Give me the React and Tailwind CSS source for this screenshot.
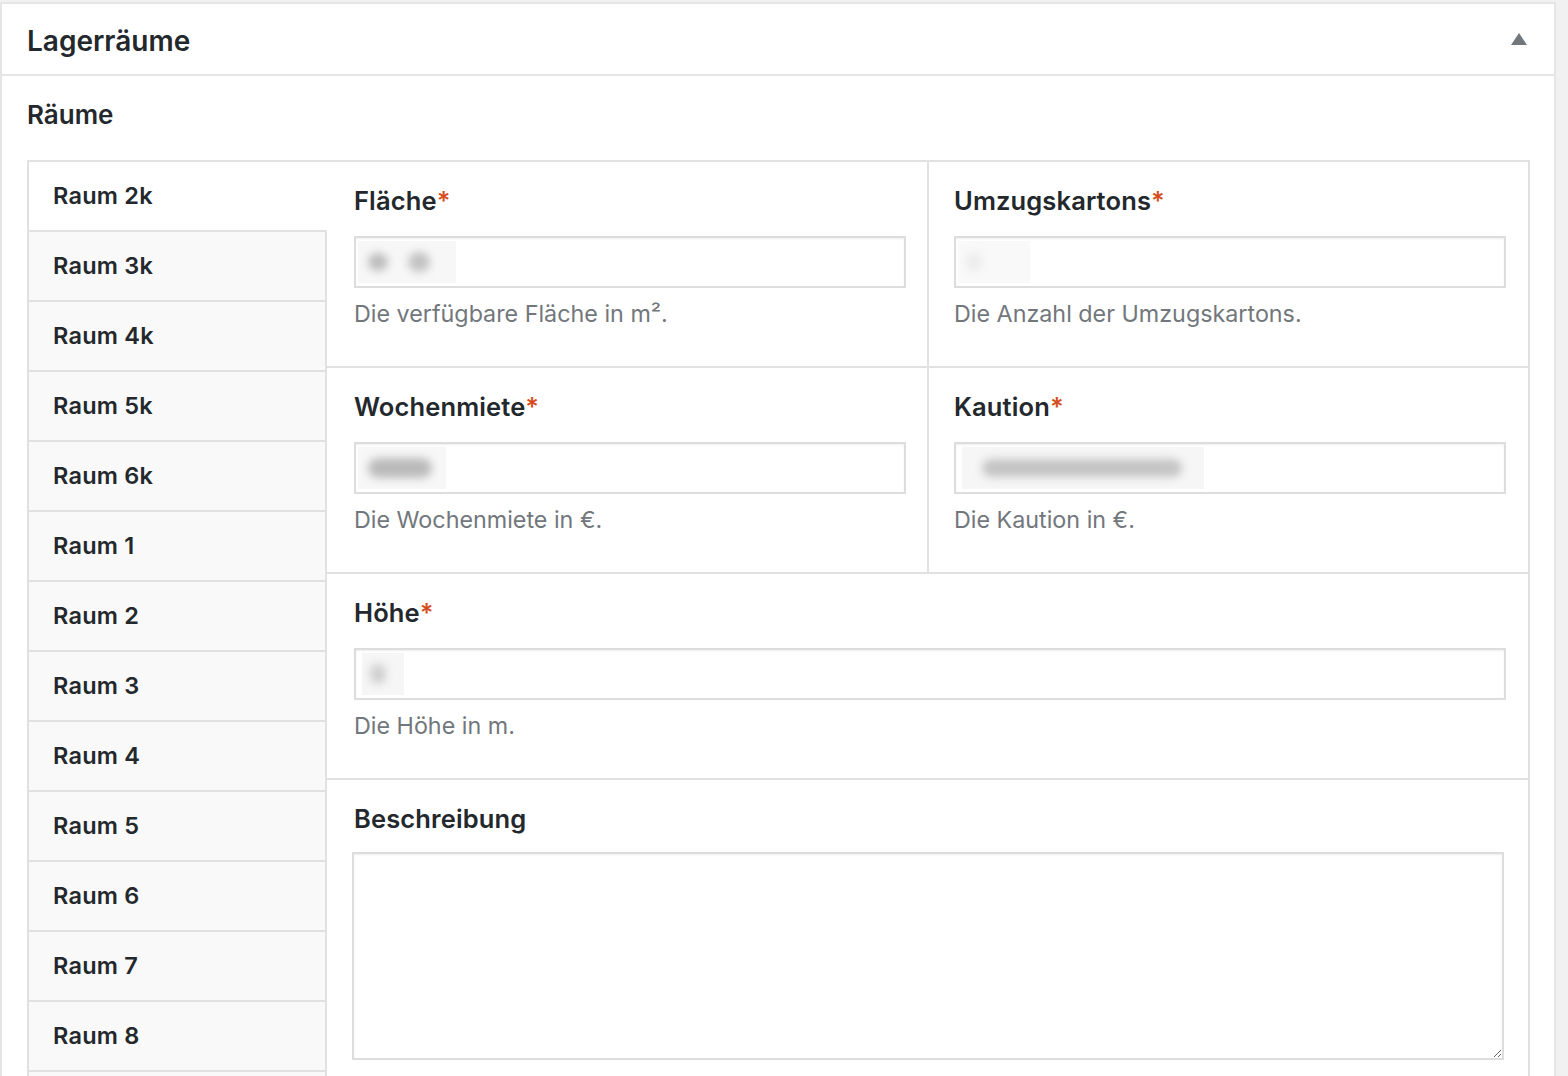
import React from "react";

const tabs = ["Raum 2k","Raum 3k","Raum 4k","Raum 5k","Raum 6k","Raum 1","Raum 2","Raum 3","Raum 4","Raum 5","Raum 6","Raum 7","Raum 8","Raum 9"];

function Label({ children, req = true }) {
  return (
    <div className="h-8 text-[25.5px] leading-8 font-semibold tracking-[0.005em] text-[#23282d]">
      {children}
      {req && <span className="text-[#d54e21]">*</span>}
    </div>
  );
}

function Input({ children }) {
  return (
    <div className="mt-[19px] h-[52px] border-2 border-[#dddddd] bg-white shadow-[inset_0_1px_2px_rgba(0,0,0,0.07)] flex items-stretch py-[3px] overflow-hidden">
      {children}
    </div>
  );
}

function Desc({ children }) {
  return <div className="mt-[10px] text-[23.3px] leading-8 text-[#72777c]">{children}</div>;
}

function Blob({ className }) {
  return <div className={"rounded-full blur-[4px] " + className}></div>;
}

export default function App() {
  return (
    <div className="h-[1076px] w-[1568px] overflow-hidden bg-[#f1f1f1] font-['Inter',sans-serif]">
      <div className="mt-[2px] w-[1556px] border-2 border-[#e5e5e5] bg-white">
        <div className="h-[72px] border-b-2 border-[#e5e5e5] flex items-center justify-between pl-[25px] pr-[27px]">
          <div className="pt-[3px] text-[28px] font-semibold text-[#23282d]">Lagerräume</div>
          <svg width="16" height="12" viewBox="0 0 16 12"><path d="M8 0L16 12H0Z" fill="#72777c" /></svg>
        </div>
        <div className="pl-[25px] pr-[24px] pt-[23px]">
          <div className="h-8 text-[26px] leading-8 font-semibold text-[#23282d]">Räume</div>
          <div className="mt-[29px] flex">
            <div className="w-[300px] shrink-0">
              {tabs.map((t, i) => (
                <div
                  key={t}
                  className={
                    "h-[70px] border-l-2 border-b-2 border-[#e1e1e1] flex items-center pl-[24px] text-[23.5px] font-semibold tracking-[0.01em] text-[#23282d] " +
                    (i === 0 ? "border-t-2 bg-white h-[72px]" : "border-r-2 bg-[#f9f9f9]")
                  }
                >
                  {t}
                </div>
              ))}
            </div>
            <div className="flex-1 border-t-2 border-r-2 border-[#e1e1e1] grid grid-cols-[602px_1fr] content-start">
              <div className="border-r-2 border-b-2 border-[#e1e1e1] pl-[27px] pr-[21px] pt-[23px] pb-[36px]">
                <Label>Fläche</Label>
                <Input>
                  <div className="ml-[2px] w-[98px] bg-[#f7f7f7] flex items-center gap-[20px] pl-[10px]">
                    <Blob className="w-[20px] h-[18px] bg-[#bcbcbc]" />
                    <Blob className="w-[22px] h-[20px] bg-[#c2c2c2]" />
                  </div>
                </Input>
                <Desc>Die verfügbare Fläche in m².</Desc>
              </div>
              <div className="border-b-2 border-[#e1e1e1] pl-[25px] pr-[22px] pt-[23px] pb-[36px]">
                <Label>Umzugskartons</Label>
                <Input>
                  <div className="ml-[2px] w-[72px] bg-[#f9f9f9] flex items-center pl-[8px]">
                    <Blob className="w-[16px] h-[18px] bg-[#ebebeb]" />
                  </div>
                </Input>
                <Desc>Die Anzahl der Umzugskartons.</Desc>
              </div>
              <div className="border-r-2 border-b-2 border-[#e1e1e1] pl-[27px] pr-[21px] pt-[23px] pb-[36px]">
                <Label>Wochenmiete</Label>
                <Input>
                  <div className="ml-[2px] w-[88px] bg-[#f7f7f7] flex items-center pl-[10px]">
                    <Blob className="w-[64px] h-[20px] bg-[#bababa]" />
                  </div>
                </Input>
                <Desc>Die Wochenmiete in €.</Desc>
              </div>
              <div className="border-b-2 border-[#e1e1e1] pl-[25px] pr-[22px] pt-[23px] pb-[36px]">
                <Label>Kaution</Label>
                <Input>
                  <div className="ml-[6px] w-[242px] bg-[#f6f6f6] flex items-center pl-[20px]">
                    <Blob className="w-[200px] h-[18px] bg-[#c4c4c4]" />
                  </div>
                </Input>
                <Desc>Die Kaution in €.</Desc>
              </div>
              <div className="col-span-2 border-b-2 border-[#e1e1e1] pl-[27px] pr-[22px] pt-[23px] pb-[36px]">
                <Label>Höhe</Label>
                <Input>
                  <div className="ml-[6px] w-[42px] bg-[#f6f6f6] flex items-center pl-[8px]">
                    <Blob className="w-[16px] h-[20px] bg-[#cfcfcf]" />
                  </div>
                </Input>
                <Desc>Die Höhe in m.</Desc>
              </div>
              <div className="col-span-2 pl-[25px] pr-[24px] pt-[23px] pb-[38px]">
                <div className="pl-[2px]"><Label req={false}>Beschreibung</Label></div>
                <textarea className="mt-[17px] block w-full h-[208px] border-2 border-[#dddddd] bg-white shadow-[inset_0_1px_2px_rgba(0,0,0,0.07)] outline-none"></textarea>
                <div className="pl-[2px]"><Desc>Eine ausführliche Beschreibung des Raumes.</Desc></div>
              </div>
            </div>
          </div>
        </div>
      </div>
    </div>
  );
}
